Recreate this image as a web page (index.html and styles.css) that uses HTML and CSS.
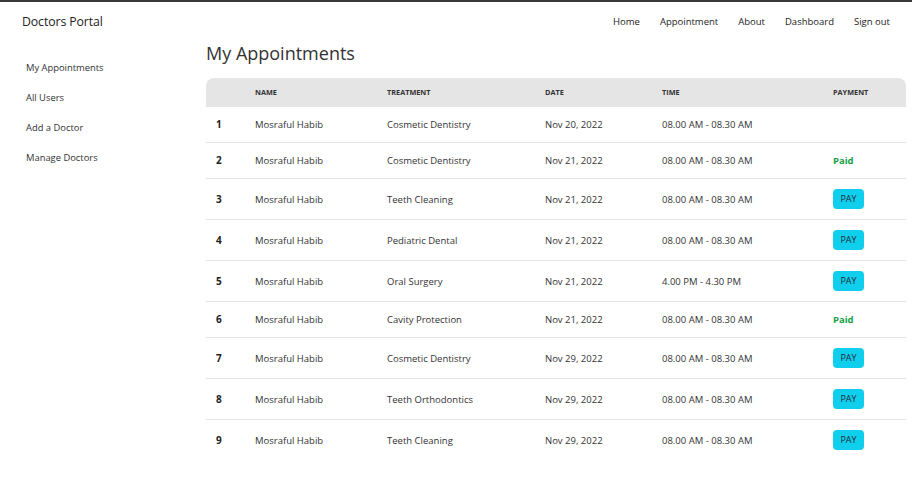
FILE: index.html
```html
<!DOCTYPE html>
<html lang="en">
<head>
<meta charset="utf-8">
<title>Doctors Portal</title>
<link rel="stylesheet" href="styles.css">
</head>
<body>
<header class="navbar">
  <div class="brand">Doctors Portal</div>
  <nav class="links">
    <a href="#">Home</a>
    <a href="#">Appointment</a>
    <a href="#">About</a>
    <a href="#">Dashboard</a>
    <a href="#">Sign out</a>
  </nav>
</header>
<div class="layout">
  <aside class="sidebar">
    <a href="#">My Appointments</a>
    <a href="#">All Users</a>
    <a href="#">Add a Doctor</a>
    <a href="#">Manage Doctors</a>
  </aside>
  <main class="content">
    <h1 class="title">My Appointments</h1>
    <table class="table">
      <colgroup>
        <col class="c1"><col class="c2"><col class="c3"><col class="c4"><col class="c5"><col class="c6">
      </colgroup>
      <thead>
        <tr><th></th><th>Name</th><th>Treatment</th><th>Date</th><th>Time</th><th>Payment</th></tr>
      </thead>
      <tbody>
        <tr><td class="num">1</td><td>Mosraful Habib</td><td>Cosmetic Dentistry</td><td>Nov 20, 2022</td><td>08.00 AM - 08.30 AM</td><td></td></tr>
        <tr><td class="num">2</td><td>Mosraful Habib</td><td>Cosmetic Dentistry</td><td>Nov 21, 2022</td><td>08.00 AM - 08.30 AM</td><td><span class="paid">Paid</span></td></tr>
        <tr><td class="num">3</td><td>Mosraful Habib</td><td>Teeth Cleaning</td><td>Nov 21, 2022</td><td>08.00 AM - 08.30 AM</td><td><button class="pay">PAY</button></td></tr>
        <tr><td class="num">4</td><td>Mosraful Habib</td><td>Pediatric Dental</td><td>Nov 21, 2022</td><td>08.00 AM - 08.30 AM</td><td><button class="pay">PAY</button></td></tr>
        <tr><td class="num">5</td><td>Mosraful Habib</td><td>Oral Surgery</td><td>Nov 21, 2022</td><td>4.00 PM - 4.30 PM</td><td><button class="pay">PAY</button></td></tr>
        <tr><td class="num">6</td><td>Mosraful Habib</td><td>Cavity Protection</td><td>Nov 21, 2022</td><td>08.00 AM - 08.30 AM</td><td><span class="paid">Paid</span></td></tr>
        <tr><td class="num">7</td><td>Mosraful Habib</td><td>Cosmetic Dentistry</td><td>Nov 29, 2022</td><td>08.00 AM - 08.30 AM</td><td><button class="pay">PAY</button></td></tr>
        <tr><td class="num">8</td><td>Mosraful Habib</td><td>Teeth Orthodontics</td><td>Nov 29, 2022</td><td>08.00 AM - 08.30 AM</td><td><button class="pay">PAY</button></td></tr>
        <tr><td class="num">9</td><td>Mosraful Habib</td><td>Teeth Cleaning</td><td>Nov 29, 2022</td><td>08.00 AM - 08.30 AM</td><td><button class="pay">PAY</button></td></tr>
      </tbody>
    </table>
  </main>
</div>
</body>
</html>
```
FILE: styles.css
```css
* { box-sizing: border-box; }
html, body { margin: 0; padding: 0; }
body {
  font-family: "Open Sans", "Noto Sans", sans-serif;
  color: #333;
  background: #fff;
  border-top: 2px solid #3a3a3a;
}
a { color: inherit; text-decoration: none; }

.navbar {
  height: 38px;
  display: flex;
  align-items: center;
  justify-content: space-between;
  padding: 0 22px;
}
.brand {
  font-size: 12.3px;
  color: #222;
  letter-spacing: -0.1px;
}
.links {
  display: flex;
  gap: 20px;
  font-size: 9.5px;
  color: #222;
}

.layout {
  display: grid;
  grid-template-columns: 206px 1fr;
  padding-right: 6px;
}
.sidebar {
  display: flex;
  flex-direction: column;
  padding: 13px 0 0 26px;
}
.sidebar a {
  height: 30px;
  line-height: 30px;
  font-size: 9.4px;
  color: #333;
}

.title {
  margin: 0;
  height: 26px;
  line-height: 26px;
  font-size: 18px;
  font-weight: 400;
  color: #333;
  margin-bottom: 12px;
}

.table {
  width: 700px;
  border-collapse: separate;
  border-spacing: 0;
  table-layout: fixed;
}
.c1 { width: 39px; }
.c2 { width: 132px; }
.c3 { width: 158px; }
.c4 { width: 117px; }
.c5 { width: 171px; }
.c6 { width: 83px; }

.table th {
  background: #e5e5e5;
  text-align: left;
  font-size: 7.3px;
  font-weight: 700;
  text-transform: uppercase;
  color: #333;
  padding: 10px 0 10px 10px;
  line-height: 9px;
  height: 29px;
}
.table th:first-child { border-top-left-radius: 8px; }
.table th:last-child { border-top-right-radius: 8px; }

.table td {
  font-size: 9.5px;
  line-height: 13px;
  padding: 11px 0 11px 10px;
  border-bottom: 1px solid #e5e5e5;
  color: #333;
  white-space: nowrap;
}
.table tbody tr:last-child td { border-bottom: none; }
.table td.num { font-weight: 700; color: #222; font-size: 10px; }

.paid {
  color: #15a046;
  font-weight: 700;
}
.pay {
  display: block;
  height: 20px;
  width: 31px;
  margin: -1px 0;
  padding: 0;
  border: none;
  border-radius: 4px;
  background: #0fcfec;
  color: #1f2937;
  font-family: "Open Sans", "Noto Sans", sans-serif;
  font-size: 9px;
  line-height: 20px;
  text-align: center;
}
```
